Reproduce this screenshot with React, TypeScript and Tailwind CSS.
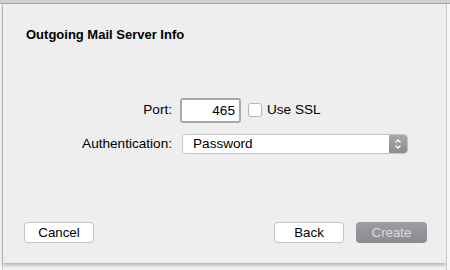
import { useState } from "react";

const font = { fontFamily: '"Liberation Sans", Arial, sans-serif' };

// macOS風の「送信用メールサーバ情報」シート
export default function App() {
  const [port, setPort] = useState("465");
  const [useSsl, setUseSsl] = useState(false);

  return (
    <div
      className="relative flex h-[270px] w-[450px] flex-col overflow-hidden bg-[#f4f4f4] text-[13px] text-black"
      style={font}
    >
      <div className="h-[4px] shrink-0 border-b border-[#a9a7a9] bg-[#d2d0d2]" />
      <div className="flex flex-1">
        <div className="w-[3px] shrink-0 border-r border-[#c8c8c8] bg-[#f8f8f8]" />
        <div className="flex h-[259px] w-[443px] shrink-0 flex-col bg-[#eeeeee] px-[21px] pb-[20px] pt-[23px] shadow-[0_2px_4px_rgba(0,0,0,0.3)]">
          <h1 className="ml-[2px] text-[13px] font-bold leading-4">
            Outgoing Mail Server Info
          </h1>

          <div className="mt-[55px] flex items-center text-[13.6px]">
            <label className="w-[149px] pr-[1px] text-right">Port:</label>
            <div className="ml-[7px] rounded-[3px] bg-[#a8a8aa] p-[2px]">
              <input
                value={port}
                onChange={(e) => setPort(e.target.value)}
                className="block h-[21px] w-[57px] bg-white px-[4px] text-right text-[13.6px] outline-none"
                style={font}
              />
            </div>
            <button
              type="button"
              onClick={() => setUseSsl(!useSsl)}
              className="ml-[7px] flex items-center gap-[5px]"
            >
              <span className="block h-[14px] w-[14px] rounded-[3px] border border-[#b5b5b5] bg-white" />
              <span>Use SSL</span>
            </button>
          </div>

          <div className="mt-[11px] flex items-center text-[13.6px]">
            <label className="w-[149px] pr-[1px] text-right">Authentication:</label>
            <div className="ml-[9px] flex h-[20px] w-[226px] overflow-hidden rounded-[4px] border border-[#c3c3c3] bg-white">
              <span className="flex-1 pl-[10px] leading-[18px]">Password</span>
              <span className="flex w-[18px] items-center justify-center bg-gradient-to-b from-[#a8a8ac] to-[#8d8c91]">
                <svg width="8" height="12" viewBox="0 0 8 12" fill="none">
                  <path d="M1.5 4.5 L4 2 L6.5 4.5" stroke="white" strokeWidth="1.3" />
                  <path d="M1.5 7.5 L4 10 L6.5 7.5" stroke="white" strokeWidth="1.3" />
                </svg>
              </span>
            </div>
          </div>

          <div className="mt-auto flex items-center text-[13.3px]">
            <button
              type="button"
              className="h-[21px] w-[70px] rounded-[4px] border border-[#c5c5c5] bg-white leading-[19px]"
            >
              Cancel
            </button>
            <button
              type="button"
              className="ml-auto h-[21px] w-[70px] rounded-[4px] border border-[#c5c5c5] bg-white leading-[19px]"
            >
              Back
            </button>
            <button
              type="button"
              disabled
              className="ml-[12px] mr-[-2px] h-[21px] w-[71px] rounded-[4px] bg-gradient-to-b from-[#9d9ca1] to-[#8c8b90] leading-[21px] text-[#dcdcdc]"
            >
              Create
            </button>
          </div>
        </div>
        <div className="flex-1 border-l border-[#c8c8c8] bg-[#f8f8f8]" />
      </div>
    </div>
  );
}
